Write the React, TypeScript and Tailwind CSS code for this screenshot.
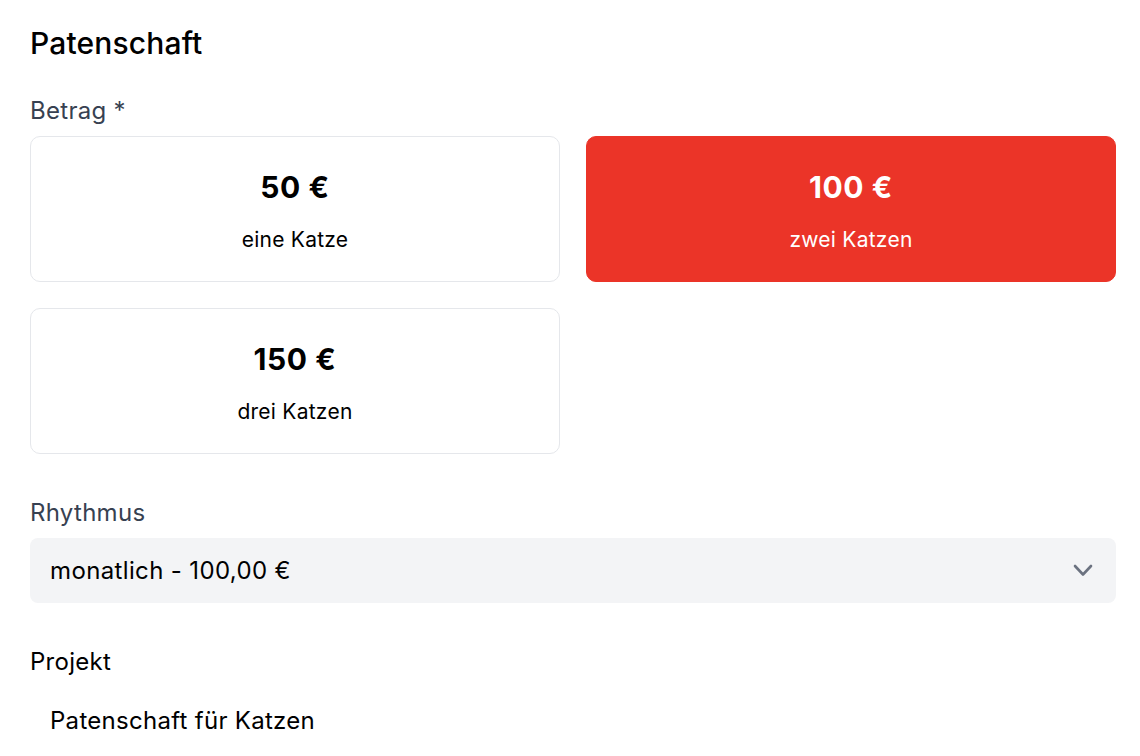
import React from "react";

const options = [
  { amount: "50 €", label: "eine Katze", selected: false },
  { amount: "100 €", label: "zwei Katzen", selected: true },
  { amount: "150 €", label: "drei Katzen", selected: false },
];

export default function App() {
  return (
    <div
      className="min-h-screen bg-white pl-[30px] pr-[24px] pt-[25px] text-black"
      style={{ fontFamily: "Inter, 'Noto Sans', sans-serif" }}
    >
      <h1 className="text-[30px] leading-[36px] font-medium tracking-[0.005em]">Patenschaft</h1>

      <div className="mt-[34px] text-[24px] leading-[32px] text-[#374151] tracking-[0.012em]">Betrag *</div>

      <div className="mt-[9px] grid grid-cols-2 gap-x-[26px] gap-y-[26px]">
        {options.map((o) => (
          <div
            key={o.amount}
            className={
              o.selected
                ? "h-[146px] rounded-[10px] border border-[#eb3428] bg-[#eb3428] text-white flex flex-col items-center pt-[32px]"
                : "h-[146px] rounded-[10px] border border-[#e5e7eb] bg-white text-black flex flex-col items-center pt-[32px]"
            }
          >
            <div className="text-[30px] leading-[36px] font-bold tracking-[0.02em]">{o.amount}</div>
            <div className="mt-[21px] text-[21px] leading-[28px] tracking-[0.012em]">{o.label}</div>
          </div>
        ))}
      </div>

      <div className="mt-[43px] text-[24px] leading-[32px] text-[#374151] tracking-[0.012em]">Rhythmus</div>

      <div className="mt-[9px] h-[65px] rounded-[8px] bg-[#f3f4f6] flex items-center justify-between pl-[20px] pr-[23px]">
        <span className="text-[24px] leading-[32px] tracking-[0.015em]">monatlich - 100,00 €</span>
        <svg width="20" height="13" viewBox="0 0 20 13" fill="none">
          <polyline
            points="2,2 10,10.5 18,2"
            stroke="#6b7280"
            strokeWidth="2.6"
            strokeLinecap="round"
            strokeLinejoin="round"
          />
        </svg>
      </div>

      <div className="mt-[43px] text-[24px] leading-[32px] tracking-[0.012em]">Projekt</div>
      <div className="mt-[27px] pl-[20px] text-[24px] leading-[32px] tracking-[0.012em]">Patenschaft für Katzen</div>
    </div>
  );
}
